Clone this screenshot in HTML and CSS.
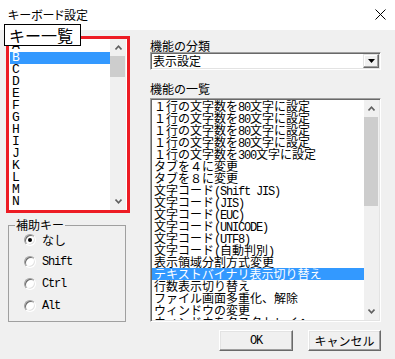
FILE: index.html
```html
<!DOCTYPE html>
<html lang="ja">
<head>
<meta charset="utf-8">
<title>キーボード設定</title>
<link rel="stylesheet" href="styles.css">
</head>
<body>
<div class="titlebar">
  <span class="title">キーボード設定</span>
  <svg class="close" width="11" height="11" viewBox="0 0 11 11"><path d="M0.5 0.5 L10.5 10.5 M10.5 0.5 L0.5 10.5" stroke="#000" stroke-width="1" fill="none"/></svg>
</div>
<div class="main">
  <div class="left">
    <div class="keybox">
      <ul class="keylist h">
        <li>A</li><li class="sel">B</li><li>C</li><li>D</li><li>E</li><li>F</li><li>G</li><li>H</li><li>I</li><li>J</li><li>K</li><li>L</li><li>M</li><li>N</li>
      </ul>
      <div class="sbar">
        <div class="arrow"><svg width="7" height="5" viewBox="0 0 7 5"><polyline points="0.5,4.5 3.5,1.2 6.5,4.5" fill="none" stroke="#606060" stroke-width="1.6"/></svg></div>
        <div class="thumb thumb-left"></div>
        <div class="track"></div>
        <div class="arrow"><svg width="7" height="5" viewBox="0 0 7 5"><polyline points="0.5,0.5 3.5,3.8 6.5,0.5" fill="none" stroke="#606060" stroke-width="1.6"/></svg></div>
      </div>
    </div>
    <fieldset class="group">
      <legend>補助キー</legend>
      <div class="radios">
        <div class="radio"><span class="circle on"></span><span>なし</span></div>
        <div class="radio"><span class="circle"></span><span class="h">Shift</span></div>
        <div class="radio"><span class="circle"></span><span class="h">Ctrl</span></div>
        <div class="radio"><span class="circle"></span><span class="h">Alt</span></div>
      </div>
    </fieldset>
  </div>
  <div class="right">
    <div class="lbl">機能の分類</div>
    <div class="combo">
      <span class="combo-text">表示設定</span>
      <span class="dd"><svg width="7" height="4" viewBox="0 0 7 4"><polygon points="0,0 7,0 3.5,4" fill="#000"/></svg></span>
    </div>
    <div class="lbl lbl2">機能の一覧</div>
    <div class="flist">
      <ul class="funcs">
        <li>１行の文字数を<span class="h">80</span>文字に設定</li>
        <li>１行の文字数を<span class="h">80</span>文字に設定</li>
        <li>１行の文字数を<span class="h">80</span>文字に設定</li>
        <li>１行の文字数を<span class="h">80</span>文字に設定</li>
        <li>１行の文字数を<span class="h">300</span>文字に設定</li>
        <li>タブを４に変更</li>
        <li>タブを８に変更</li>
        <li>文字コード<span class="h">(Shift JIS)</span></li>
        <li>文字コード<span class="h">(JIS)</span></li>
        <li>文字コード<span class="h">(EUC)</span></li>
        <li>文字コード<span class="h">(UNICODE)</span></li>
        <li>文字コード<span class="h">(UTF8)</span></li>
        <li>文字コード<span class="h">(</span>自動判別<span class="h">)</span></li>
        <li>表示領域分割方式変更</li>
        <li class="sel">テキストバイナリ表示切り替え</li>
        <li>行数表示切り替え</li>
        <li>ファイル画面多重化、解除</li>
        <li>ウィンドウの変更</li>
        <li>ウィンドウをタスクトレイへ</li>
      </ul>
      <div class="sbar sbar-r">
        <div class="arrow"><svg width="7" height="5" viewBox="0 0 7 5"><polyline points="0.5,4.5 3.5,1.2 6.5,4.5" fill="none" stroke="#606060" stroke-width="1.6"/></svg></div>
        <div class="thumb thumb-right"></div>
        <div class="track"></div>
        <div class="arrow"><svg width="7" height="5" viewBox="0 0 7 5"><polyline points="0.5,0.5 3.5,3.8 6.5,0.5" fill="none" stroke="#606060" stroke-width="1.6"/></svg></div>
      </div>
    </div>
    <div class="buttons">
      <button class="btn btn-ok"><span class="h">OK</span></button>
      <button class="btn btn-cancel">キャンセル</button>
    </div>
  </div>
</div>
<div class="callout">キー一覧</div>
</body>
</html>
```

FILE: styles.css
```css
* { box-sizing: border-box; }

body {
  margin: 0;
  width: 395px;
  height: 359px;
  overflow: hidden;
  position: relative;
  background: #f0f0f0;
  color: #000;
  font-family: "Noto Sans CJK JP", sans-serif;
  font-size: 12px;
  line-height: 12px;
}

ul { list-style: none; margin: 0; padding: 0; }

.h {
  font-family: "Liberation Mono", "Noto Sans CJK JP", monospace;
  letter-spacing: -1.2px;
}

.titlebar {
  height: 30px;
  background: #fff;
  display: flex;
  align-items: center;
  justify-content: space-between;
  padding: 0 9px 0 8px;
}

.title {
  font-feature-settings: "palt";
  font-size: 12px;
}

.close { display: block; margin-top: -1px; }

.main {
  display: flex;
  padding: 6px 0 0 6px;
}

.left {
  width: 124px;
  display: flex;
  flex-direction: column;
}

.keybox {
  height: 177px;
  border: 3px solid #ed1c24;
  background: #fff;
  display: flex;
}

.keylist {
  flex: 1;
  padding: 1px 0 0 1px;
  overflow: hidden;
}

.keylist li {
  height: 12px;
  line-height: 12px;
  padding-left: 2px;
  font-size: 13px;
}

.sel {
  background: #3399ff;
  color: #fff;
}

.sbar {
  width: 16px;
  margin-right: 1px;
  background: #f0f0f0;
  display: flex;
  flex-direction: column;
}

.arrow {
  height: 17px;
  display: flex;
  align-items: center;
  justify-content: center;
}

.arrow svg { display: block; }

.thumb {
  background: #cdcdcd;
  margin-right: 1px;
}

.thumb-left { height: 21px; }
.thumb-right { height: 89px; }

.track { flex: 1; }

.group {
  margin: 5px 0 0 2px;
  width: 118px;
  height: 104px;
  border: 1px solid #a0a0a0;
  padding: 0 0 0 6px;
}

.group legend {
  padding: 0 1px;
  line-height: 14px;
  font-size: 12px;
}

.radios { margin-top: -3px; }

.radio {
  height: 22px;
  display: flex;
  align-items: center;
  padding-left: 9px;
}

.circle {
  width: 12px;
  height: 12px;
  border-radius: 50%;
  border: 1px solid;
  border-color: #a0a0a0 #ffffff #ffffff #a0a0a0;
  box-shadow: inset 1px 1px 0 #696969, inset -1px -1px 0 #e3e3e3;
  background: #fff;
  margin-right: 6px;
  display: flex;
  align-items: center;
  justify-content: center;
}

.circle.on::after {
  content: "";
  width: 4px;
  height: 4px;
  border-radius: 50%;
  background: #000;
}

.right {
  width: 231px;
  margin-left: 20px;
  display: flex;
  flex-direction: column;
}

.lbl {
  height: 12px;
  margin-top: 4px;
}

.lbl2 { margin-top: 13px; }

.combo {
  height: 18px;
  background: #fff;
  border: 1px solid;
  border-color: #a0a0a0 #ffffff #ffffff #a0a0a0;
  box-shadow: inset 1px 1px 0 #696969, inset -1px -1px 0 #e3e3e3;
  display: flex;
  align-items: center;
}

.combo-text { padding-left: 2px; }

.dd {
  margin-left: auto;
  margin-right: 1px;
  width: 16px;
  height: 14px;
  background: #f0f0f0;
  border: 1px solid;
  border-color: #e3e3e3 #696969 #696969 #e3e3e3;
  box-shadow: inset -1px -1px 0 #a0a0a0, inset 1px 1px 0 #ffffff;
  display: flex;
  align-items: center;
  justify-content: center;
}

.dd svg { display: block; }

.flist {
  margin-top: 3px;
  height: 224px;
  background: #fff;
  border: 1px solid;
  border-color: #a0a0a0 #ffffff #ffffff #a0a0a0;
  box-shadow: inset 1px 1px 0 #696969, inset -1px -1px 0 #e3e3e3;
  padding: 1px;
  display: flex;
}

.funcs {
  flex: 1;
  overflow: hidden;
}

.funcs li {
  height: 12px;
  padding-left: 2px;
  white-space: nowrap;
}

.sbar-r {
  width: 15px;
  margin-right: 0;
}

.buttons {
  margin-top: 8px;
  display: flex;
  justify-content: flex-end;
  gap: 15px;
}

.btn {
  height: 21px;
  font-family: "Noto Sans CJK JP", sans-serif;
  font-size: 12px;
  line-height: 12px;
  color: #000;
  background: #f0f0f0;
  border: 1px solid;
  border-color: #ffffff #696969 #696969 #ffffff;
  box-shadow: inset -1px -1px 0 #a0a0a0, inset 1px 1px 0 #e3e3e3;
  padding: 0;
  display: flex;
  align-items: center;
  justify-content: center;
}

.btn-ok { width: 74px; }
.btn-cancel { width: 73px; }

.callout {
  position: absolute;
  left: 4px;
  top: 24px;
  width: 77px;
  height: 22px;
  border: 1px solid #000;
  background: #fff;
  font-size: 16px;
  line-height: 20px;
  padding-left: 4px;
}
```
